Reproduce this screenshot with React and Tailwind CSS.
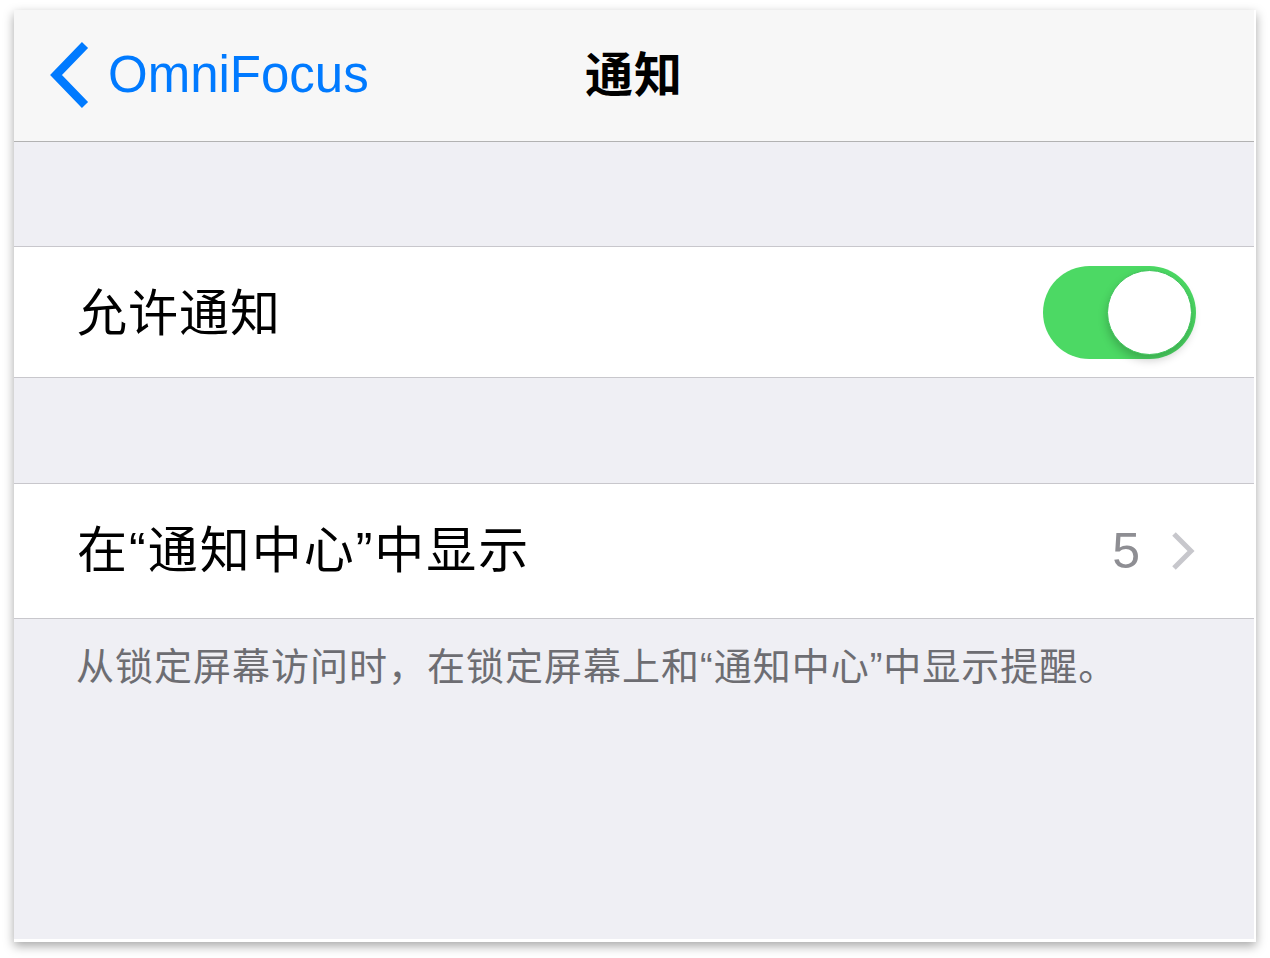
const font = { fontFamily: '"Liberation Sans", "Noto Sans CJK SC", sans-serif' };

function BackChevron() {
  return (
    <svg width="40" height="66" viewBox="0 0 40 66" className="shrink-0">
      <polyline points="35,3 6,33 35,63" fill="none" stroke="#007aff" strokeWidth="8.5" strokeLinecap="butt" strokeLinejoin="miter" />
    </svg>
  );
}

function Toggle() {
  return (
    <div className="w-[153px] h-[93px] rounded-full bg-[#4cd964] flex items-center justify-end pr-[4px]">
      <div className="w-[85px] h-[85px] rounded-full bg-white border border-[#3fc45a] shadow-[0_5px_10px_rgba(0,0,0,0.22)]"></div>
    </div>
  );
}

function Chevron() {
  return (
    <svg width="26" height="40" viewBox="0 0 26 40">
      <polyline points="4,3 21,20 4,37" fill="none" stroke="#c7c7cc" strokeWidth="5" />
    </svg>
  );
}

export default function App() {
  return (
    <div className="w-full h-[958px] bg-white pt-[10px] pl-[14px]" style={font}>
      <div className="w-[1242px] h-[932px] bg-white pr-[2px] pb-[3px] shadow-[0_4px_10px_rgba(0,0,0,0.35)]">
        <div className="w-full h-full bg-[#efeff4] flex flex-col">
          {/* Nav bar */}
          <div className="h-[132px] bg-[#f7f7f7] border-b border-[#b2b2b2] grid grid-cols-[1fr_auto_1fr] items-center">
            <div className="flex items-center pl-[36px] gap-[18px] pb-[2px]">
              <BackChevron />
              <span className="text-[51px] leading-none text-[#007aff]">OmniFocus</span>
            </div>
            <div className="text-[48px] font-bold text-black leading-none tracking-[1px]">通知</div>
            <div></div>
          </div>

          <div className="h-[104px]"></div>

          {/* Allow notifications */}
          <div className="h-[132px] bg-white border-y border-[#c8c7cc] flex items-center justify-between pl-[63px] pr-[58px]">
            <span className="text-[50px] leading-none text-black tracking-[1px] pt-[3px]">允许通知</span>
            <Toggle />
          </div>

          <div className="h-[105px]"></div>

          {/* Notification center */}
          <div className="h-[136px] bg-white border-y border-[#c8c7cc] flex items-center justify-between pl-[63px] pr-[58px]">
            <span className="text-[50px] leading-none text-black tracking-[2px]">在“通知中心”中显示</span>
            <div className="flex items-center gap-[30px]">
              <span className="text-[50px] leading-none text-[#8e8e93]">5</span>
              <Chevron />
            </div>
          </div>

          <p className="pl-[62px] pt-[29px] text-[38px] leading-none text-[#6d6d72] tracking-[1px]">
            从锁定屏幕访问时，在锁定屏幕上和“通知中心”中显示提醒。
          </p>
        </div>
      </div>
    </div>
  );
}
